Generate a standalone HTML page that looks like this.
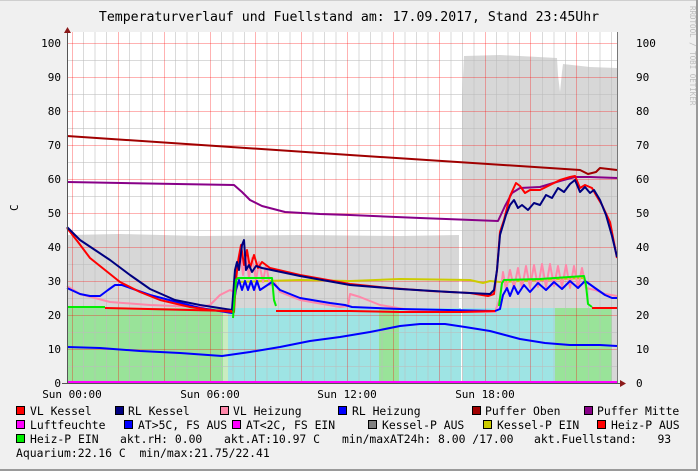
<!DOCTYPE html>
<html><head><meta charset="utf-8"><style>
html,body{margin:0;padding:0;background:#f0f0f0;}
svg{display:block;font-family:"DejaVu Sans Mono","Liberation Mono",monospace;}
text{white-space:pre;}
</style></head><body>
<svg width="698" height="471" viewBox="0 0 698 471" xmlns="http://www.w3.org/2000/svg">
<rect x="0" y="0" width="698" height="471" fill="#f0f0f0"/>
<line x1="0" y1="0.5" x2="698" y2="0.5" stroke="#cfcfcf"/>
<line x1="0" y1="470" x2="698" y2="470" stroke="#9a9a9a" stroke-width="2"/>
<line x1="697" y1="0" x2="697" y2="471" stroke="#9a9a9a" stroke-width="2"/>
<text x="349" y="21" font-size="13.2" text-anchor="middle" fill="#000">Temperaturverlauf und Fuellstand am: 17.09.2017, Stand 23:45Uhr</text>
<text transform="translate(690,6) rotate(90)" font-size="7.5" fill="#bdbdbd">RRDTOOL / TOBI OETIKER</text>
<text transform="translate(18,211) rotate(-90)" font-size="11" fill="#000">C</text>
<rect x="67" y="32" width="550" height="351" fill="#ffffff"/>
<path d="M67,383 L67,235 L120,234 L200,236 L300,235 L400,236 L459,235 L459,383 Z" fill="#d7d7d7"/>
<path d="M462,383 L462,98 L464,56 L500,55 L557,58 L558,75 L560,92 L562,72 L563,64 L590,67 L617,68 L617,383 Z" fill="#d7d7d7"/>
<rect x="67" y="308" width="156" height="75" fill="#99e399"/>
<rect x="223" y="308" width="5" height="75" fill="#c9ecc0"/>
<rect x="228" y="308" width="152" height="75" fill="#9ee4e4"/>
<rect x="379" y="308" width="20" height="75" fill="#99e399"/>
<rect x="399" y="308" width="62" height="75" fill="#9ee4e4"/>
<rect x="463" y="308" width="92" height="75" fill="#9ee4e4"/>
<rect x="555" y="308" width="57" height="75" fill="#99e399"/>
<g stroke="#bbbbbb" stroke-opacity="0.55" stroke-width="1">
<path d="M83.5,32V383M95,32V383M106.5,32V383M129.5,32V383M141,32V383M152.5,32V383M175.5,32V383M187,32V383M198.5,32V383M221.5,32V383M233,32V383M244.5,32V383M267,32V383M278.5,32V383M290,32V383M313,32V383M324.5,32V383M336,32V383M359,32V383M370.5,32V383M382,32V383M405,32V383M416.5,32V383M428,32V383M451,32V383M462.5,32V383M474,32V383M496.5,32V383M508,32V383M519.5,32V383M542.5,32V383M554,32V383M565.5,32V383M588.5,32V383M600,32V383M611.5,32V383"/>
<path d="M67,60.5H617M67,94.5H617M67,128.5H617M67,162.5H617M67,196.5H617M67,230.5H617M67,264.5H617M67,298.5H617M67,332.5H617M67,366.5H617"/>
</g>
<g stroke="#ff0000" stroke-opacity="0.3" stroke-width="1">
<path d="M72.5,32V383M118.5,32V383M164.5,32V383M210.5,32V383M255.5,32V383M301.5,32V383M347.5,32V383M393.5,32V383M439.5,32V383M485.5,32V383M530.5,32V383M576.5,32V383"/>
<path d="M67,43.5H617M67,77.5H617M67,111.5H617M67,145.5H617M67,179.5H617M67,213.5H617M67,247.5H617M67,281.5H617M67,315.5H617M67,349.5H617"/>
</g>
<g fill="none" stroke-width="2" stroke-linejoin="round">
<path stroke="#a00000" d="M67,136 L350,155 L580,170 L588,174 L596,172 L600,168 L617,170"/>
<path stroke="#880088" d="M67,182 L234,185 L242,192 L250,200 L262,206 L285,212 L320,214 L350,215 L420,218 L498,221 L505,206 L512,193 L520,188 L540,187 L560,181 L575,177 L590,177 L617,178"/>
<path stroke="#cccc00" d="M235,282 L300,280 L350,281 L400,279 L470,280 L483,283 L490,281 L500,282 L560,279 L585,278"/>
<path stroke="#ff88aa" d="M67,286 L80,294 L110,302 L150,305 L200,307 L210,305 L220,295 L230,290 L234,292 L237,265 L240,250 L243,275 L246,255 L249,278 L252,258 L256,280 L259,262 L263,282 L266,265 L270,285 L275,283 L280,292 L300,300 L340,307 L348,306 L350,294 L360,297 L380,305 L410,310 L450,312 L495,312 L500,298 L503,272 L506,290 L510,270 L514,288 L518,268 L522,288 L526,266 L530,287 L534,265 L538,287 L542,264 L546,287 L550,264 L554,286 L558,266 L562,287 L566,265 L570,288 L574,266 L578,288 L582,268 L586,288 L595,290 L605,294 L617,296"/>
<path stroke="#0000ff" d="M67,288 L80,294 L90,296 L100,296 L108,290 L115,285 L122,285 L150,295 L200,308 L232,313 L236,290 L239,280 L242,290 L245,281 L248,290 L251,281 L254,290 L257,281 L260,290 L272,282 L280,290 L300,298 L330,303 L345,305 L352,307 L400,309 L495,311 L500,309 L503,295 L507,288 L510,296 L514,286 L518,294 L524,285 L530,292 L538,283 L546,290 L554,282 L562,289 L570,281 L578,288 L585,281 L588,283 L595,288 L605,295 L612,298 L617,298"/>
<path stroke="#ff0000" d="M67,228 L78,242 L90,258 L105,270 L120,282 L140,292 L160,300 L190,307 L210,310 L234,312 L236,280 L238,262 L241,245 L244,265 L247,250 L250,268 L254,255 L258,268 L262,262 L270,268 L300,275 L350,284 L390,288 L430,291 L470,293 L488,296 L494,294 L497,270 L500,232 L504,220 L510,196 L516,183 L520,186 L525,193 L530,190 L540,190 L550,185 L560,180 L570,177 L575,176 L580,188 L585,185 L592,188 L596,195 L602,205 L610,222 L617,258"/>
<path stroke="#000080" d="M67,227 L80,240 L95,250 L110,260 L130,275 L150,289 L175,300 L200,305 L232,310 L235,270 L237,262 L239,270 L242,245 L244,240 L246,270 L249,265 L252,272 L256,266 L262,268 L300,276 L350,285 L400,289 L450,292 L490,294 L494,290 L497,270 L500,235 L503,225 L506,215 L510,205 L514,200 L518,208 L522,205 L528,210 L534,203 L540,205 L546,195 L552,198 L558,188 L564,192 L570,184 L575,180 L580,192 L585,187 L590,193 L594,190 L600,200 L606,215 L612,236 L617,257"/>
<path stroke="#00ee00" d="M67,307 L105,307 M233,318 L236,280 L238,278 L272,278 L274,300 L276,306 M499,306 L502,283 L504,280 L540,279 L584,276 L586,285 L588,304 L592,307"/>
<path stroke="#ff0000" d="M105,308 L232,311 M276,311 L350,311 L400,312 L460,312 L495,311 M592,308 L617,308"/>
<path stroke="#0000ff" d="M67,347 L100,348 L140,351 L180,353 L222,356 L250,352 L280,347 L310,341 L340,337 L370,332 L400,326 L420,324 L445,324 L465,327 L490,331 L520,339 L545,343 L570,345 L600,345 L617,346"/>
<path stroke="#ff00ff" d="M67,382 L617,382"/>
</g>
<line x1="67.5" y1="28" x2="67.5" y2="384" stroke="#555"/>
<line x1="617.5" y1="32" x2="617.5" y2="383" stroke="#777"/>
<line x1="62" y1="383.5" x2="622" y2="383.5" stroke="#555"/>
<path d="M64,33 L67.5,27 L71,33 Z" fill="#8b1a1a"/>
<path d="M620,380 L626,383.5 L620,387 Z" fill="#8b1a1a"/>
<g font-size="11" fill="#000" text-anchor="end">
<text x="61" y="47">100</text><text x="61" y="81">90</text><text x="61" y="115">80</text><text x="61" y="149">70</text><text x="61" y="183">60</text><text x="61" y="217">50</text><text x="61" y="251">40</text><text x="61" y="285">30</text><text x="61" y="319">20</text><text x="61" y="353">10</text><text x="61" y="387">0</text>
</g>
<g font-size="11" fill="#000">
<text x="636" y="47">100</text><text x="636" y="81">90</text><text x="636" y="115">80</text><text x="636" y="149">70</text><text x="636" y="183">60</text><text x="636" y="217">50</text><text x="636" y="251">40</text><text x="636" y="285">30</text><text x="636" y="319">20</text><text x="636" y="353">10</text><text x="636" y="387">0</text>
</g>
<g font-size="11" fill="#000" text-anchor="middle">
<text x="72" y="398">Sun 00:00</text><text x="210" y="398">Sun 06:00</text><text x="347" y="398">Sun 12:00</text><text x="485" y="398">Sun 18:00</text>
</g>
<g stroke="#000" stroke-width="1">
<rect x="16.5" y="406.5" width="8" height="8" fill="#ff0000"/>
<rect x="115.5" y="406.5" width="8" height="8" fill="#000080"/>
<rect x="220.5" y="406.5" width="8" height="8" fill="#ff88aa"/>
<rect x="338.5" y="406.5" width="8" height="8" fill="#0000ff"/>
<rect x="472.5" y="406.5" width="8" height="8" fill="#a00000"/>
<rect x="584.5" y="406.5" width="8" height="8" fill="#880088"/>
<rect x="16.5" y="420.5" width="8" height="8" fill="#ff00ff"/>
<rect x="124.5" y="420.5" width="8" height="8" fill="#0000ff"/>
<rect x="232.5" y="420.5" width="8" height="8" fill="#ff00ff"/>
<rect x="368.5" y="420.5" width="8" height="8" fill="#808080"/>
<rect x="483.5" y="420.5" width="8" height="8" fill="#cccc00"/>
<rect x="597.5" y="420.5" width="8" height="8" fill="#ff0000"/>
<rect x="16.5" y="434.5" width="8" height="8" fill="#00ee00"/>
</g>
<g font-size="11.4" fill="#000">
<text x="30" y="415">VL Kessel</text><text x="128" y="415">RL Kessel</text><text x="233" y="415">VL Heizung</text><text x="352" y="415">RL Heizung</text><text x="485" y="415">Puffer Oben</text><text x="597" y="415">Puffer Mitte</text>
<text x="30" y="429">Luftfeuchte</text><text x="138" y="429">AT&gt;5C, FS AUS</text><text x="246" y="429">AT&lt;2C, FS EIN</text><text x="382" y="429">Kessel-P AUS</text><text x="497" y="429">Kessel-P EIN</text><text x="611" y="429">Heiz-P AUS</text>
<text x="30" y="443">Heiz-P EIN</text><text x="120" y="443">akt.rH: 0.00</text><text x="224" y="443">akt.AT:10.97 C</text><text x="342" y="443">min/maxAT24h: 8.00 /17.00</text><text x="534" y="443">akt.Fuellstand:   93</text>
<text x="16" y="457">Aquarium:22.16 C  min/max:21.75/22.41</text>
</g>
</svg>
</body></html>
